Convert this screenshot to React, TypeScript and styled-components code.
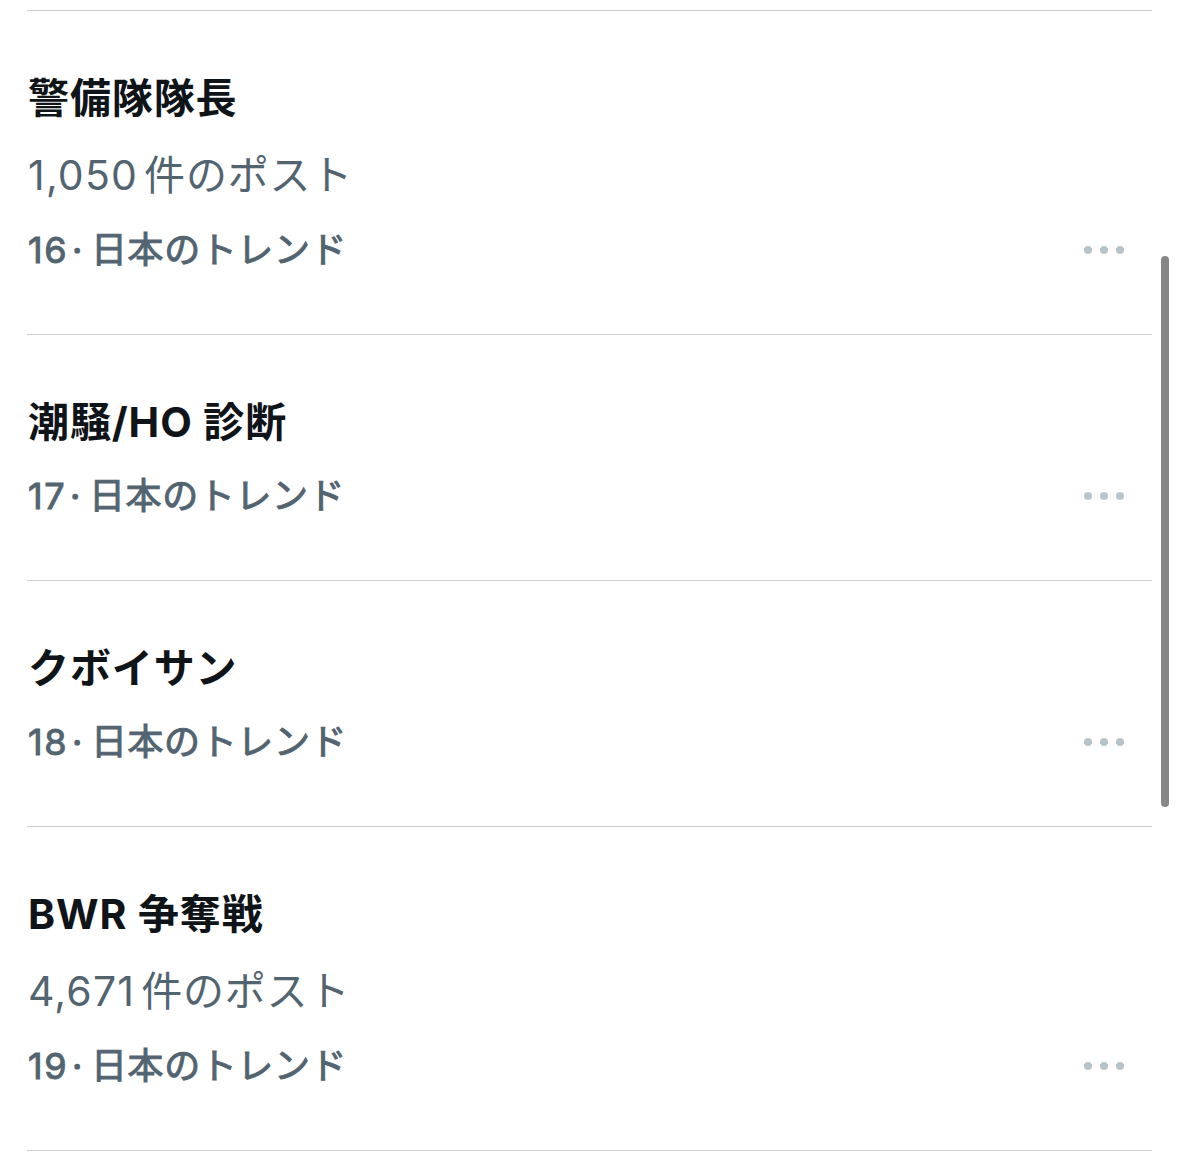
import React from 'react';
import styled, { createGlobalStyle } from 'styled-components';

interface Trend {
  rank: number;
  title: string;
  count?: string;
}

const trends: Trend[] = [
  { rank: 16, title: '警備隊隊長', count: '1,050' },
  { rank: 17, title: '潮騒/HO 診断' },
  { rank: 18, title: 'クボイサン' },
  { rank: 19, title: 'BWR 争奪戦', count: '4,671' },
];

const GlobalStyle = createGlobalStyle`
  html, body {
    margin: 0;
    padding: 0;
    background: #ffffff;
    overflow: hidden;
  }
  body {
    font-family: Inter, "Noto Sans CJK JP", sans-serif;
    -webkit-font-smoothing: antialiased;
  }
`;

const Page = styled.div`
  position: relative;
  width: 1179px;
  height: 1165px;
  padding-top: 10px;
  box-sizing: border-box;
  background: #ffffff;
`;

const List = styled.ul`
  list-style: none;
  margin: 0 27px;
  padding: 0;
  border-top: 1px solid #cfcfd1;
`;

const Item = styled.li`
  display: flex;
  flex-direction: column;
  gap: 26px;
  padding: 62px 0 61px 1px;
  border-bottom: 1px solid #cfcfd1;
`;

const Title = styled.div`
  font-size: 41px;
  line-height: 50px;
  font-weight: 700;
  color: #0f1419;
  letter-spacing: 0.9px;
`;

const Posts = styled.div`
  font-size: 41px;
  line-height: 52px;
  font-weight: 400;
  color: #536471;
  letter-spacing: 0.8px;
`;

const Count = styled.span`
  letter-spacing: 1.2px;
  margin-right: 6px;
`;

const MetaRow = styled.div`
  display: flex;
  align-items: center;
  justify-content: space-between;
  padding-right: 28px;
`;

const Meta = styled.span`
  font-size: 36px;
  line-height: 46px;
  font-weight: 400;
  color: #536471;
  letter-spacing: 0.6px;
  -webkit-text-stroke: 1px #536471;
`;

const Rank = styled.span`
  letter-spacing: 1.5px;
`;

const Dot = styled.span`
  margin: 0 8px 0 4px;
`;

const MoreButton = styled.button`
  display: flex;
  gap: 8px;
  padding: 0;
  border: none;
  background: none;
  cursor: pointer;
`;

const MoreDot = styled.span`
  width: 8px;
  height: 8px;
  border-radius: 50%;
  background: #b8c5cd;
`;

const Scrollbar = styled.div`
  position: absolute;
  top: 256px;
  left: 1161px;
  width: 8px;
  height: 551px;
  border-radius: 4px;
  background: #878787;
`;

export default function App() {
  return (
    <Page>
      <GlobalStyle />
      <List>
        {trends.map(t => (
          <Item key={t.rank}>
            <Title>{t.title}</Title>
            {t.count && (
              <Posts>
                <Count>{t.count}</Count>件のポスト
              </Posts>
            )}
            <MetaRow>
              <Meta>
                <Rank>{t.rank}</Rank>
                <Dot>·</Dot>
                日本のトレンド
              </Meta>
              <MoreButton aria-label="その他">
                <MoreDot />
                <MoreDot />
                <MoreDot />
              </MoreButton>
            </MetaRow>
          </Item>
        ))}
      </List>
      <Scrollbar />
    </Page>
  );
}
